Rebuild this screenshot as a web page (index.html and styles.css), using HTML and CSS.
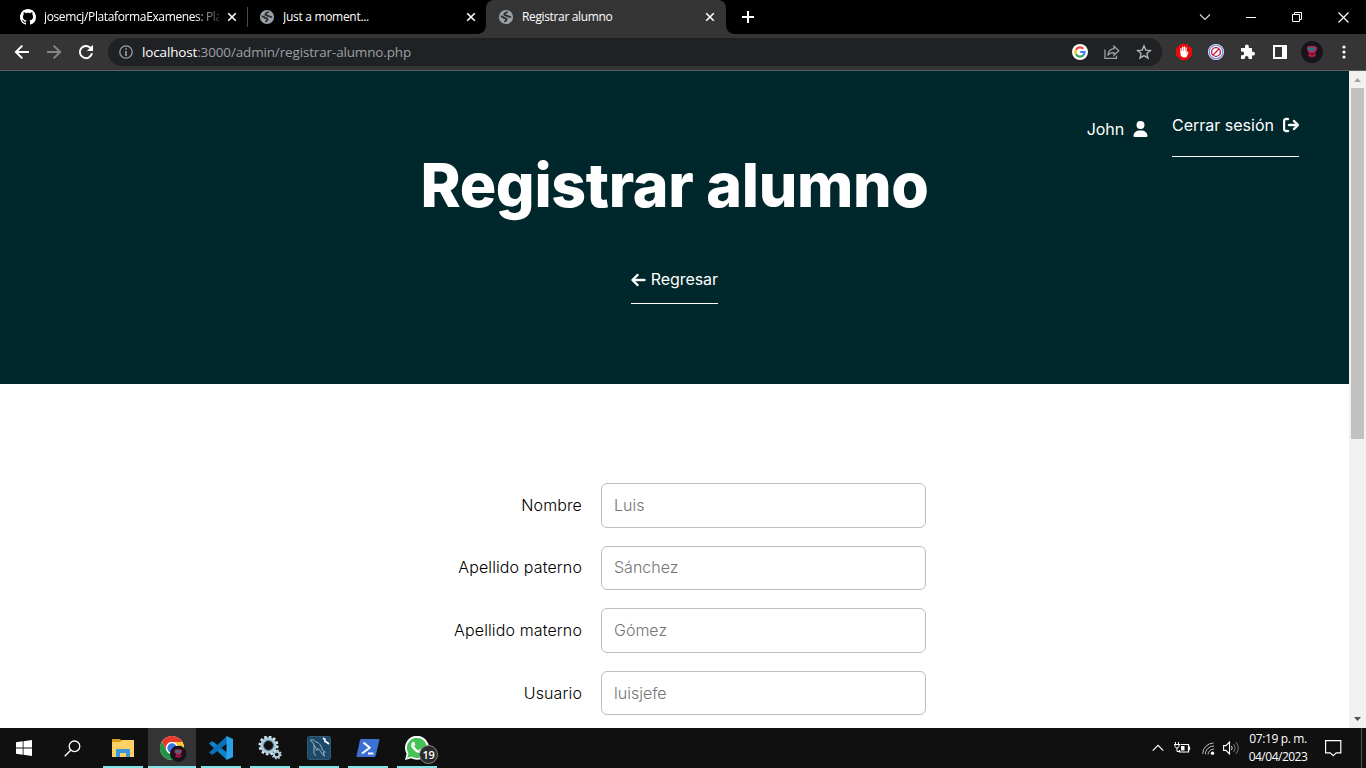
FILE: index.html
```html
<!DOCTYPE html>
<html lang="es">
<head>
<meta charset="utf-8">
<title>Registrar alumno</title>
<link rel="stylesheet" href="styles.css">
</head>
<body>
<svg class="defs" width="0" height="0">
  <symbol id="globe" viewBox="0 0 16 16"><circle cx="8" cy="8" r="7.100" fill="#9aa0a6"/><path d="M9.300 2.500C9 4 6 3.800 6.300 5.600c.4 1.200 2.700.5 3.600 1.600.7.900 1.900.7 3.300.7M2.600 7.600c1.700-.3 2.800.5 3.500 1.500 1 .2 2.500-.2 2.500 1.200-.1 1-1.500 1-1.700 2.900" fill="none" stroke="#303134" stroke-width="1.900"/></symbol>
  <symbol id="cross" viewBox="0 0 10 10"><path d="M1.200 1.200l7.600 7.600M8.800 1.200L1.200 8.800" fill="none" stroke="#fff" stroke-width="1.600"/></symbol>
  <symbol id="avatar" viewBox="0 0 22 22"><circle cx="11" cy="11" r="11" fill="#17151b"/><path d="M6 6c2-1.500 8-1.500 10 .3.300 2-.4 3.700-1.600 4.700l-1.200 1.500H9.300C7 11.500 5.500 8.500 6 6z" fill="#c81e50"/><path d="M6.500 6.800c3-.8 5 .7 8-.8L13 9.800c-2 1-4 .2-5.400-1z" fill="#197f85"/><path d="M7.300 12.500l3 .5v1h1.500l.2-1 3-.4-.4 2.600-1.600.2-.5 1.400-1.200-1-1.300 1-.7-1.400H7.500z" fill="#b51a48"/></symbol>
</svg>

<div class="tabstrip">
  <div class="tab first">
    <svg class="favicon" viewBox="0 0 16 16"><path fill="#fff" d="M8 0C3.580 0 0 3.580 0 8c0 3.540 2.290 6.530 5.470 7.590.4.070.55-.17.55-.38 0-.19-.01-.82-.01-1.490-2.010.37-2.530-.49-2.690-.94-.09-.23-.48-.94-.82-1.130-.28-.15-.68-.52-.01-.53.63-.01 1.080.58 1.230.82.72 1.210 1.870.87 2.330.66.07-.52.28-.87.51-1.070-1.780-.2-3.640-.89-3.640-3.950 0-.87.31-1.590.82-2.150-.08-.2-.36-1.020.08-2.120 0 0 .67-.21 2.200.82.64-.18 1.320-.27 2-.27s1.360.09 2 .27c1.530-1.040 2.200-.82 2.200-.82.44 1.100.16 1.920.08 2.120.51.56.82 1.270.82 2.150 0 3.070-1.870 3.750-3.650 3.950.29.25.54.73.54 1.480 0 1.070-.01 1.930-.01 2.200 0 .21.15.46.55.38A8.010 8.010 0 0016 8c0-4.420-3.580-8-8-8z"/></svg>
    <span class="tab-title fade t-github">josemcj/PlataformaExamenes: Pla</span>
    <svg class="tab-close"><use href="#cross"/></svg>
  </div>
  <div class="tab second">
    <svg class="favicon"><use href="#globe"/></svg>
    <span class="tab-title t-moment">Just a moment...</span>
    <svg class="tab-close"><use href="#cross"/></svg>
  </div>
  <div class="tab active">
    <svg class="favicon"><use href="#globe"/></svg>
    <span class="tab-title t-active">Registrar alumno</span>
    <svg class="tab-close"><use href="#cross"/></svg>
  </div>
  <svg class="new-tab" viewBox="0 0 12 12"><path d="M6 0v12M0 6h12" stroke="#fff" stroke-width="2"/></svg>
  <div class="window-controls">
    <span><svg width="12" height="12"><path d="M1 3.500l5 5 5-5" fill="none" stroke="#ddd" stroke-width="1.100"/></svg></span>
    <span><svg width="10" height="12"><path d="M0 6.500h10" stroke="#fff"/></svg></span>
    <span><svg width="10" height="10"><path d="M.5 2.500h7v7h-7zM2.500 2.500v-2h7v7h-2" fill="none" stroke="#fff"/></svg></span>
    <span><svg width="11" height="11"><path d="M.5.500l10 10M10.500.500l-10 10" stroke="#fff" stroke-width="1.200"/></svg></span>
  </div>
</div>

<div class="toolbar">
  <span class="tool"><svg width="16" height="16"><path d="M15 8H2M8.300 1.600L1.900 8l6.400 6.400" fill="none" stroke="#fff" stroke-width="2"/></svg></span>
  <span class="tool"><svg width="16" height="16"><path d="M1 8h13M7.700 1.600L14.100 8l-6.400 6.400" fill="none" stroke="#85868a" stroke-width="2"/></svg></span>
  <span class="tool"><svg width="16" height="16"><path d="M13.200 4.800A6.100 6.100 0 1 0 14 9.300" fill="none" stroke="#fff" stroke-width="2"/><path d="M15 .8v6.100H8.900z" fill="#fff"/></svg></span>
  <div class="omnibox">
    <svg class="info" width="14" height="14"><circle cx="7" cy="7" r="6.200" fill="none" stroke="#9aa0a6" stroke-width="1.300"/><path d="M7 3.200v1.600M7 6v5" stroke="#9aa0a6" stroke-width="1.600"/></svg>
    <span class="url"><b>localhost</b>:3000/admin/registrar-alumno.php</span>
    <span class="tool"><svg width="16" height="16"><circle cx="8" cy="8" r="8" fill="#fff"/><g fill="none" stroke-width="2.200"><path d="M4 5.700A4.600 4.600 0 0 1 11.300 4.700" stroke="#ea4335"/><path d="M4 10.300a4.600 4.600 0 0 1 0-4.600" stroke="#fbbc05"/><path d="M11.300 11.300A4.600 4.600 0 0 1 4 10.300" stroke="#34a853"/><path d="M8.200 8h4.400a4.600 4.600 0 0 1-1.500 3.400" stroke="#4285f4"/></g></svg></span>
    <span class="tool"><svg width="16" height="16"><path d="M1 5.500v8.800h11.500v-2.500" fill="none" stroke="#9aa0a6" stroke-width="1.300"/><path d="M10 2.200l4.800 4.600L10 11.200V8.700C7 8.600 5 9.500 3.700 11.500 4 8 6 5.200 10 4.700z" fill="none" stroke="#9aa0a6" stroke-width="1.300"/></svg></span>
    <span class="tool"><svg width="16" height="16"><path d="M8 1.800l1.800 4.300 4.700.4-3.600 3 1.100 4.600L8 11.600l-4 2.500 1.100-4.600-3.600-3 4.700-.4z" fill="none" stroke="#b4b6b8" stroke-width="1.300"/></svg></span>
  </div>
  <div class="extensions">
    <span class="tool"><svg width="16" height="16"><path d="M4.700 0h6.600L16 4.700v6.600L11.300 16H4.700L0 11.300V4.700z" fill="#e40d0d"/><path d="M4.300 8V4.300q.6-.7 1.200 0V7h.5V3q.6-.7 1.300 0v4h.4V2.500q.6-.7 1.300 0V7h.4V3.500q.6-.7 1.300 0V9l1-1.500q.9-.2.800.5l-1.500 4.200q-.7 1.400-2.400 1.400-3 0-4-2.400z" fill="#fff"/></svg></span>
    <span class="tool"><svg width="16" height="16"><circle cx="8" cy="8" r="8" fill="#fff"/><circle cx="8" cy="8" r="6.800" fill="none" stroke="#6c97e2" stroke-width="1.300"/><circle cx="8" cy="8" r="4.400" fill="none" stroke="#c91d4b" stroke-width="1.400"/><path d="M5 11l6-6" stroke="#c91d4b" stroke-width="1.400"/></svg></span>
    <span class="tool"><svg width="16" height="16"><path d="M1 4h4V2.500a1.900 1.900 0 0 1 3.800 0V4H12v3.800h1.100a1.900 1.900 0 0 1 0 3.800H12V15H8.600v-1.100a1.900 1.900 0 0 0-3.800 0V15H1v-3.700h1.200a1.900 1.900 0 0 0 0-3.800H1z" fill="#fff"/></svg></span>
    <span class="tool"><svg width="14" height="14"><path d="M0 0h14v14H0zM2 2v10h7V2z" fill="#fff" fill-rule="evenodd"/></svg></span>
    <span class="tool"><svg width="22" height="22"><use href="#avatar"/></svg></span>
    <span class="tool"><svg width="4" height="14"><circle cx="2" cy="2" r="1.600" fill="#fff"/><circle cx="2" cy="7" r="1.600" fill="#fff"/><circle cx="2" cy="12" r="1.600" fill="#fff"/></svg></span>
  </div>
</div>

<div class="viewport">
  <main class="page">
    <header class="hero">
      <nav class="user-nav">
        <span class="user">John
          <svg width="15" height="16" viewBox="0 0 448 512"><path fill="#fff" d="M224 256A128 128 0 1 0 224 0a128 128 0 1 0 0 256zm-45.700 48C79.800 304 0 383.800 0 482.300C0 498.700 13.300 512 29.700 512H418.300c16.400 0 29.700-13.300 29.700-29.700C448 383.800 368.200 304 269.700 304H178.300z"/></svg>
        </span>
        <a class="link logout">Cerrar sesión
          <svg width="16" height="16" viewBox="0 0 512 512"><path fill="#fff" stroke="#fff" stroke-width="14" d="M160 96c17.700 0 32-14.300 32-32s-14.300-32-32-32H96C43 32 0 75 0 128V384c0 53 43 96 96 96h64c17.700 0 32-14.300 32-32s-14.300-32-32-32H96c-17.700 0-32-14.300-32-32V128c0-17.700 14.300-32 32-32h64zM502.600 278.600c12.500-12.500 12.500-32.800 0-45.300l-128-128c-12.500-12.500-32.800-12.500-45.300 0s-12.500 32.800 0 45.300L402.700 224H192c-17.700 0-32 14.300-32 32s14.300 32 32 32H402.700l-73.400 73.400c-12.500 12.500-12.500 32.800 0 45.300s32.800 12.500 45.300 0l128-128z"/></svg>
        </a>
      </nav>
      <h1>Registrar alumno</h1>
      <a class="link back"><svg width="15" height="16" viewBox="0 0 448 512"><path fill="#fff" stroke="#fff" stroke-width="14" d="M9.400 233.400c-12.500 12.500-12.500 32.800 0 45.300l160 160c12.500 12.500 32.800 12.500 45.300 0s12.500-32.800 0-45.300L109.200 288H416c17.700 0 32-14.300 32-32s-14.300-32-32-32H109.300L214.600 118.600c12.500-12.500 12.500-32.800 0-45.300s-32.800-12.500-45.300 0l-160 160z"/></svg><span>Regresar</span></a>
    </header>
    <form class="form">
      <label for="nombre">Nombre</label><input id="nombre" type="text" placeholder="Luis">
      <label for="paterno">Apellido paterno</label><input id="paterno" type="text" placeholder="Sánchez">
      <label for="materno">Apellido materno</label><input id="materno" type="text" placeholder="Gómez">
      <label for="usuario">Usuario</label><input id="usuario" type="text" placeholder="luisjefe">
    </form>
  </main>
  <div class="scrollbar">
    <svg width="17" height="17"><path d="M5 11l3.500-4 3.500 4z" fill="#a3a3a3"/></svg>
    <div class="thumb"></div>
    <svg width="17" height="17"><path d="M5 6l3.500 4L12 6z" fill="#505050"/></svg>
  </div>
</div>

<footer class="taskbar">
  <span class="task system"><svg width="16" height="16"><path d="M0 2.200l6.700-.9v6.200H0zM7.500 1.200L16 0v7.500H7.500zM0 8.400h6.700v6.300L0 13.800zM7.500 8.400H16V16l-8.500-1.200z" fill="#fff"/></svg></span>
  <span class="task system"><svg width="17" height="17"><circle cx="10.500" cy="6.300" r="5.300" fill="none" stroke="#fff" stroke-width="1.300"/><path d="M6.700 10.200L.7 16.200" stroke="#fff" stroke-width="1.400"/></svg></span>
  <div class="apps">
    <span class="task open"><svg width="22" height="20"><path d="M0 1h8l2 2v3H0z" fill="#d99a1a"/><path d="M0 4h8l2-2h12v17H0z" fill="#fbd065"/><path d="M4 19v-7q0-1 1-1h12q1 0 1 1v7h-4v-4H8v4z" fill="#3b96dd"/></svg></span>
    <span class="task open current"><svg class="chrome" width="28" height="27"><circle cx="12" cy="12" r="12" fill="#fff"/><path d="M1.600 6A12 12 0 0 1 22.400 6H12a6 6 0 0 0-5.200 9z" fill="#e33b2e"/><path d="M22.400 6A12 12 0 0 1 12 24l5.200-9A6 6 0 0 0 12 6z" fill="#fcc934"/><path d="M12 24A12 12 0 0 1 1.600 6l5.200 9a6 6 0 0 0 5.200 3l3-.8z" fill="#229342"/><circle cx="12" cy="12" r="6" fill="#fff"/><circle cx="12" cy="12" r="4.700" fill="#3b78e7"/><use href="#avatar" x="10" y="9.500" width="16.500" height="16.500"/></svg></span>
    <span class="task open"><svg width="24" height="24"><path d="M0 7.600L2.300 5.400 4 5.500 18 16.500V24z" fill="#0e83cd"/><path d="M0 16.400l2.300 2.200 1.700-.1L18 7.500V0z" fill="#0b6fb5"/><path d="M17.500 0L24 3v18l-6.500 3z" fill="#2aa2ea"/></svg></span>
    <span class="task open"><svg class="gears" width="24" height="24"><circle cx="10.500" cy="9.500" r="6.500" fill="none" stroke="#abc9db" stroke-width="3.500"/><circle cx="10.500" cy="9.500" r="8.800" fill="none" stroke="#d3e2ec" stroke-width="2.500" stroke-dasharray="2.600 2.008"/><circle cx="10.500" cy="9.500" r="5" fill="none" stroke="#52788f"/><circle cx="18.700" cy="18.500" r="2.800" fill="none" stroke="#a9c9dc" stroke-width="2"/><circle cx="18.700" cy="18.500" r="4.200" fill="none" stroke="#d3e2ec" stroke-width="1.600" stroke-dasharray="1.500 1.799"/></svg></span>
    <span class="task open"><svg width="24" height="24"><rect x=".5" y=".5" width="23" height="23" rx="2" fill="#1c4a68" stroke="#2f5a73"/><path d="M3.500 4c2-.8 4 .5 5 1.800 4 .7 6 4.500 6.800 8.300l3 2-2 .3 1.200 3.800c-2-1.500-3.500-4-4.500-5.800l-2.300-2-.8 2c-1.500-2-1.600-4.200-3-5.500L6 6.800C5 6 3.700 5.500 3.500 4zM7 9v8.500l2 2.500" fill="none" stroke="#a9bfc9" stroke-width=".9"/><path d="M16 2l2 1.500v2l1.800.8L22 8" fill="none" stroke="#fff" stroke-width="1.700"/></svg></span>
    <span class="task open"><svg width="24" height="20"><path d="M5.200 1h17.600q.8 0 .6 1L19.600 18q-.2 1-1.200 1H1.200Q.2 19 .5 18L4 2q.2-1 1.200-1z" fill="#3c70d2"/><path d="M7.500 4.500l6.200 5.200L6 15.500M12 15.500h5.500" fill="none" stroke="#fff" stroke-width="2"/></svg></span>
    <span class="task open whatsapp"><svg width="24" height="24"><path d="M0 24l1.600-6.200A12 12 0 1 1 6.200 22.300z" fill="#fff"/><path d="M2.300 21.700l1.200-4.400A10 10 0 1 1 6.800 20.500z" fill="#43c354"/><path d="M7.500 6q1.500-1 2 .4l.8 2-1.200 1.700q1.500 3 4.500 4.300l1.600-1.700 2.600 1.300q.5 1.200-1 2.400-2.300 1.700-6-.7Q6.500 12.500 6 9.500 5.900 7.500 7.500 6z" fill="#fff"/></svg><i class="badge">19</i></span>
  </div>
  <div class="tray">
    <svg width="12" height="12"><path d="M.7 8.700L6 3.400l5.300 5.300" fill="none" stroke="#fff" stroke-width="1.200"/></svg>
    <svg class="battery" width="17" height="12"><path d="M6.500 2.500h8v7.500H5.500v-2M15.500 4.500v3.500" fill="none" stroke="#fff" stroke-width="1.200"/><path d="M7 4h3.500v4.500H7z" fill="#fff"/><path d="M1.500 0v2M4.500 0v2M0 2.500h6M1 3v1.500q.5 1.500 2 1.500t2-1.500V3M3 6v3.500h3" fill="none" stroke="#fff"/></svg>
    <svg class="wifi" width="13" height="13"><g fill="none" stroke="#bbb" stroke-width="1"><path d="M.7 12A11 11 0 0 1 11.500 1"/><path d="M3.300 12.300A8.500 8.500 0 0 1 12 4"/><path d="M6 12.500A6 6 0 0 1 12 7"/></g><circle cx="10.500" cy="11.300" r="1.700" fill="#fff"/></svg>
    <svg class="volume" width="17" height="14"><path d="M.6 4.600h2.300L6.500 1v12L2.900 9.400H.6z" fill="none" stroke="#fff" stroke-width="1.100"/><path d="M8.500 5q1.300 2 0 4" fill="none" stroke="#ddd"/><path d="M10.700 3q3 4 0 8M13 1q4.500 6 0 12" fill="none" stroke="#777"/></svg>
    <div class="clock"><span class="time">07:19 p. m.</span><span class="date">04/04/2023</span></div>
    <svg class="notify" width="17" height="17"><path d="M.6.600h15.200v12.200h-4.500L8.200 15.600l-3-2.800H.6z" fill="none" stroke="#fff" stroke-width="1.200"/></svg>
    <span class="desktop-peek"></span>
  </div>
</footer>
</body>
</html>
```
FILE: styles.css
```css
* { box-sizing: border-box; }
body {
  margin: 0;
  width: 1366px;
  height: 768px;
  overflow: hidden;
  display: flex;
  flex-direction: column;
  background: #fff;
  font-family: Inter, "Liberation Sans", sans-serif;
}
svg { display: block; flex: none; }
.defs { position: absolute; }

/* Browser tabs */
.tabstrip {
  height: 34px;
  flex: none;
  display: flex;
  align-items: center;
  background: #000;
  color: #fff;
  font: 12px/16px "Open Sans", "Noto Sans", sans-serif;
}
.tab { height: 34px; display: flex; align-items: center; flex: none; }
.tab.first { width: 248px; padding: 0 11px 0 20px; background: linear-gradient(#4a4a4a, #4a4a4a) 247px 7px / 1px 20px no-repeat; }
.tab.second { width: 238px; padding: 0 10px 0 11px; }
.tab.active {
  width: 240px;
  padding: 0 11px 0 12px;
  background: #353535;
  border-radius: 8px 8px 0 0;
  position: relative;
}
.tab.active::before,
.tab.active::after {
  content: "";
  position: absolute;
  bottom: 0;
  width: 8px;
  height: 8px;
}
.tab.active::before { left: -8px; background: radial-gradient(circle at 0 0, transparent 7.5px, #353535 8px); }
.tab.active::after { right: -8px; background: radial-gradient(circle at 100% 0, transparent 7.5px, #353535 8px); }
.favicon { width: 16px; height: 16px; margin-right: 8px; }
.tab-title { flex: 1; white-space: nowrap; overflow: hidden; }
.tab-title.fade { -webkit-mask-image: linear-gradient(90deg, #000 150px, transparent 182px); mask-image: linear-gradient(90deg, #000 150px, transparent 182px); }
.t-github { letter-spacing: -0.37px; }
.t-moment { letter-spacing: -0.3px; }
.t-active { letter-spacing: -0.36px; }
.tab-close { width: 10px; height: 10px; }
.tab.first .tab-close { margin-left: 8px; }
.new-tab { width: 12px; height: 12px; margin-left: 16px; }
.window-controls { margin-left: auto; display: flex; height: 28px; }
.window-controls span { width: 46px; display: grid; place-items: center; }

/* Navigation bar */
.toolbar {
  height: 37px;
  flex: none;
  display: flex;
  align-items: center;
  padding: 0 6px;
  background: #353535;
  border-bottom: 1px solid #5d5e5f;
}
.tool { width: 32px; height: 28px; flex: none; display: grid; place-items: center; }
.omnibox {
  width: 1054px;
  height: 28px;
  margin: 0 6px;
  padding: 0 2px 0 11px;
  border-radius: 14px;
  background: #202124;
  display: flex;
  align-items: center;
}
.info { margin-right: 9px; }
.url { flex: 1; color: #9aa0a6; font: 13.500px/20px "Open Sans", "Noto Sans", sans-serif; letter-spacing: -0.15px; white-space: nowrap; }
.url b { color: #fff; font-weight: 400; }
.extensions { display: flex; }

/* Page area */
.viewport { flex: 1; min-height: 0; display: flex; }
.page { width: 1349px; overflow: hidden; }
.hero {
  height: 313px;
  background: #00272b;
  color: #fff;
  display: flex;
  flex-direction: column;
  align-items: center;
}
.user-nav {
  align-self: stretch;
  height: 86px;
  padding-right: 50px;
  display: flex;
  justify-content: flex-end;
  align-items: flex-end;
  gap: 24px;
  font-size: 16px;
  line-height: 20px;
}
.user { display: flex; align-items: center; gap: 9px; padding-bottom: 18px; letter-spacing: -0.1px; }
.link { display: flex; align-items: center; border-bottom: 1px solid #fff; }
.logout { padding: 0 0 21px; width: 127px; justify-content: space-between; white-space: nowrap; }
.hero h1 { margin: -9px 0 0; font-size: 60.8px; line-height: 74px; font-weight: 800; letter-spacing: -0.33px; white-space: nowrap; }
.back { width: 87px; justify-content: space-between; height: 35px; margin-top: 47px; padding-bottom: 13px; font-size: 16px; line-height: 20px; }
.back span { padding-bottom: 2px; letter-spacing: -0.06px; }
.form {
  display: grid;
  grid-template-columns: 582px 325px;
  column-gap: 19px;
  row-gap: 18.200px;
  padding-top: 99.200px;
  align-items: center;
}
.form label { padding-bottom: 1px; text-align: right; font-size: 16px; font-weight: 300; letter-spacing: 0.12px; color: #000; }
.form input {
  height: 44.400px;
  width: 325px;
  padding: 0 12px 1px;
  border: 1px solid #bdbdbd;
  border-radius: 6px;
  font: 300 16px/20px Inter, "Liberation Sans", sans-serif;
}
.form input::placeholder { color: #757575; }
.scrollbar { width: 17px; background: #f1f1f1; display: flex; flex-direction: column; }
.thumb { height: 351px; margin: 0 2px auto; background: #c1c1c1; }

/* Taskbar */
.taskbar { height: 40px; flex: none; background: #101010; color: #fff; display: flex; }
.task { width: 48px; height: 40px; display: grid; place-items: center; flex: none; }
.apps { display: flex; gap: 1px; margin-left: 3px; }
.open { background: linear-gradient(#81e4e6, #81e4e6) 4px 38px / 40px 2px no-repeat; }
.open.current { background: linear-gradient(#81e4e6, #81e4e6) 0 38px / 48px 2px no-repeat #343434; }
.chrome { margin: 2px 0 0 4px; }
.whatsapp { position: relative; }
.badge {
  position: absolute;
  left: 26px;
  top: 17px;
  width: 19px;
  height: 19px;
  border: 1px solid #888;
  border-radius: 50%;
  background: #2b2b2b;
  font: 600 11px/17px "Open Sans", sans-serif;
  letter-spacing: -0.3px;
  text-align: center;
}
.tray { margin-left: auto; display: flex; align-items: center; }
.battery { margin-left: 10px; }
.wifi { margin-left: 11px; }
.volume { margin-left: 8px; }
.clock { width: 60px; margin-left: 8px; display: flex; flex-direction: column; align-items: center; font: 12px/18px "Open Sans", "Noto Sans", sans-serif; white-space: nowrap; }
.time { letter-spacing: -0.35px; }
.date { letter-spacing: -0.5px; }
.notify { margin-left: 17px; }
.desktop-peek { width: 5px; height: 40px; margin-left: 19px; border-left: 1px solid #555; }
```
